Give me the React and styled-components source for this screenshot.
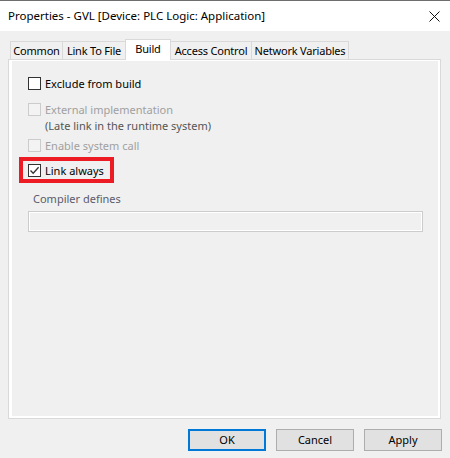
import React from "react";
import styled, { createGlobalStyle } from "styled-components";

const GlobalStyle = createGlobalStyle`
  html, body { margin: 0; padding: 0; background: #f0f0f0; }
  body { font-family: "Segoe UI", "Noto Sans", "Liberation Sans", sans-serif; font-size: 11px; color: #000; }
  * { box-sizing: border-box; }
`;

const Window = styled.div`
  width: 450px;
  height: 458px;
  background: #f0f0f0;
  border-top: 1px solid #6e6e6e;
  display: flex;
  flex-direction: column;
  overflow: hidden;
`;

const TitleBar = styled.div`
  height: 30px;
  background: #ffffff;
  display: flex;
  align-items: center;
  padding-left: 8px;
  padding-right: 6px;
`;

const Title = styled.div`
  flex: 1;
  font-size: 11.5px;
  line-height: 16px;
  white-space: nowrap;
`;

const CloseBtn = styled.div`
  width: 20px;
  height: 20px;
  display: flex;
  align-items: center;
  justify-content: center;
`;

const Body = styled.div`
  flex: 1;
  display: flex;
  flex-direction: column;
  padding: 8px 8px 0 8px;
`;

const TabStrip = styled.div`
  display: flex;
  align-items: flex-end;
  height: 20px;
  padding-left: 2px;
  position: relative;
  z-index: 1;
`;

const Tab = styled.div`
  width: ${(p) => p.$w}px;
  height: ${(p) => (p.$active ? 21 : 18)}px;
  margin-left: ${(p) => (p.$first ? 0 : -1)}px;
  margin-bottom: ${(p) => (p.$active ? -1 : 0)}px;
  background: ${(p) => (p.$active ? "#ffffff" : "#f0f0f0")};
  border: 1px solid #d9d9d9;
  border-bottom: none;
  display: flex;
  justify-content: center;
  align-items: ${(p) => (p.$active ? "flex-start" : "center")};
  padding-top: ${(p) => (p.$active ? 1 : 0)}px;
  font-size: 11px;
  letter-spacing: -0.2px;
  line-height: 16px;
  white-space: nowrap;
  position: relative;
  z-index: ${(p) => (p.$active ? 2 : 1)};
`;

const Panel = styled.div`
  height: 360px;
  margin-right: 1px;
  border: 1px solid #d9d9d9;
  background: #ffffff;
  padding: 1px 2px 2px 3px;
  display: flex;
`;

const PanelInner = styled.div`
  flex: 1;
  background: #f0f0f0;
  padding: 15px 14px 0 16px;
  display: flex;
  flex-direction: column;
  align-items: flex-start;
`;

const CheckRow = styled.div`
  display: grid;
  grid-template-columns: 13px auto;
  column-gap: 4px;
  margin-top: ${(p) => p.$mt || 0}px;
  color: ${(p) => (p.$disabled ? "#a0a0a0" : "#000")};
`;

const Box = styled.div`
  width: 13px;
  height: 13px;
  margin-top: 1px;
  border: 1px solid ${(p) => (p.$disabled ? "#cccccc" : "#333333")};
  background: ${(p) => (p.$disabled ? "#f3f3f3" : "#ffffff")};
  display: flex;
  align-items: center;
  justify-content: center;
`;

const Label = styled.div`
  line-height: 16px;
  white-space: nowrap;
`;

const SubLine = styled.div`
  color: #555555;
`;

const Highlight = styled.div`
  width: 95px;
  height: 26px;
  margin-top: 3px;
  margin-left: -9px;
  border: 4px solid #ed1c24;
  padding: 2px 0 0 5px;
`;

const FieldLabel = styled.div`
  margin-top: 8px;
  margin-left: 5px;
  line-height: 16px;
  color: #5b5b6b;
`;

const Field = styled.div`
  margin-top: 4px;
  width: 395px;
  height: 21px;
  border: 1px solid #cccccc;
  box-shadow: inset 0 0 0 1px #ffffff;
  background: #f0f0f0;
`;

const ButtonRow = styled.div`
  display: flex;
  justify-content: flex-end;
  gap: 10px;
  margin-top: 10px;
`;

const Button = styled.div`
  width: 78px;
  height: 22px;
  background: #e1e1e1;
  border: ${(p) => (p.$default ? "2px solid #0078d7" : "1px solid #adadad")};
  display: flex;
  align-items: center;
  justify-content: center;
  line-height: 16px;
`;

const Check = () => (
  <svg width="11" height="11" viewBox="0 0 11 11">
    <path d="M1.5 5.5 L4.2 8.3 L9.6 2.2" fill="none" stroke="#333" strokeWidth="1.3" />
  </svg>
);

const tabs = [
  { label: "Common", w: 53 },
  { label: "Link To File", w: 64 },
  { label: "Build", w: 46, active: true },
  { label: "Access Control", w: 82 },
  { label: "Network Variables", w: 98 },
];

export default function App() {
  return (
    <>
      <GlobalStyle />
      <Window>
        <TitleBar>
          <Title>Properties - GVL [Device: PLC Logic: Application]</Title>
          <CloseBtn>
            <svg width="11" height="11" viewBox="0 0 11 11">
              <path d="M0.5 0.5 L10.5 10.5 M10.5 0.5 L0.5 10.5" stroke="#111" strokeWidth="1" />
            </svg>
          </CloseBtn>
        </TitleBar>
        <Body>
          <TabStrip>
            {tabs.map((t, i) => (
              <Tab key={t.label} $w={t.w} $active={t.active} $first={i === 0}>
                {t.label}
              </Tab>
            ))}
          </TabStrip>
          <Panel>
            <PanelInner>
              <CheckRow>
                <Box />
                <Label>Exclude from build</Label>
              </CheckRow>
              <CheckRow $mt={10} $disabled>
                <Box $disabled />
                <Label>
                  External implementation
                  <SubLine>(Late link in the runtime system)</SubLine>
                </Label>
              </CheckRow>
              <CheckRow $mt={4} $disabled>
                <Box $disabled />
                <Label>Enable system call</Label>
              </CheckRow>
              <Highlight>
                <CheckRow>
                  <Box>
                    <Check />
                  </Box>
                  <Label>Link always</Label>
                </CheckRow>
              </Highlight>
              <FieldLabel>Compiler defines</FieldLabel>
              <Field />
            </PanelInner>
          </Panel>
          <ButtonRow>
            <Button $default>OK</Button>
            <Button>Cancel</Button>
            <Button>Apply</Button>
          </ButtonRow>
        </Body>
      </Window>
    </>
  );
}
